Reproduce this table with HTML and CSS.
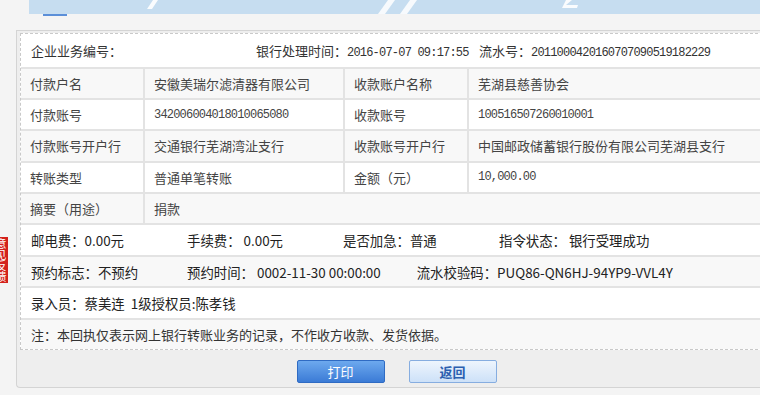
FILE: index.html
```html
<!DOCTYPE html>
<html lang="zh-CN">
<head>
    <meta charset="UTF-8">
    <meta name="viewport" content="width=device-width, initial-scale=1.0">
    <title>转账回执</title>
    <link rel="stylesheet" href="styles.css">
</head>
<body>
    <div class="steps">
        <div class="steps-bar">
            <svg width="731" height="14" viewBox="0 0 731 14">
                <polygon points="124,0 129,0 123,9 118,9" fill="#fff" opacity="0.9"/>
                <polygon points="359,0 366,0 356,14 349,14" fill="#fff" opacity="0.85"/>
                <polygon points="381,0 388,0 378,14 371,14" fill="#fff" opacity="0.85"/>
                <polygon points="537,0 543,0 537,5 549,5 548,8 533,8" fill="#fff" opacity="0.9"/>
            </svg>
        </div>
        <div class="steps-mark"></div>
    </div>

    <div class="feedback"><span>意见反馈</span></div>

    <div class="panel">
        <div class="receipt">
            <div class="receipt-head">
                <span>企业业务编号：</span>
                <span>银行处理时间：<span class="num">2016-07-07 09:17:55</span></span>
                <span>流水号：<span class="num">2011000420160707090519182229</span></span>
            </div>

            <div class="row shade">
                <div class="cell">付款户名</div>
                <div class="cell">安徽美瑞尔滤清器有限公司</div>
                <div class="cell">收款账户名称</div>
                <div class="cell">芜湖县慈善协会</div>
            </div>
            <div class="row">
                <div class="cell">付款账号</div>
                <div class="cell num">342006004018010065080</div>
                <div class="cell">收款账号</div>
                <div class="cell num">100516507260010001</div>
            </div>
            <div class="row shade">
                <div class="cell">付款账号开户行</div>
                <div class="cell">交通银行芜湖湾沚支行</div>
                <div class="cell">收款账号开户行</div>
                <div class="cell">中国邮政储蓄银行股份有限公司芜湖县支行</div>
            </div>
            <div class="row">
                <div class="cell">转账类型</div>
                <div class="cell">普通单笔转账</div>
                <div class="cell">金额（元）</div>
                <div class="cell num">10,000.00</div>
            </div>
            <div class="row shade">
                <div class="cell">摘要（用途）</div>
                <div class="cell wide">捐款</div>
            </div>

            <div class="line">
                <span class="item">邮电费：0.00元</span>
                <span class="item">手续费： 0.00元</span>
                <span class="item">是否加急：普通</span>
                <span>指令状态： 银行受理成功</span>
            </div>
            <div class="line shade">
                <span class="item">预约标志：不预约</span>
                <span class="item gap">预约时间： 0002-11-30 00:00:00</span>
                <span>流水校验码：PUQ86-QN6HJ-94YP9-VVL4Y</span>
            </div>
            <div class="line">
                <span>录入员：蔡美连&nbsp; 1级授权员:陈孝钱</span>
            </div>
            <div class="line shade note">
                <span>注：本回执仅表示网上银行转账业务的记录，不作收方收款、发货依据。</span>
            </div>
        </div>

        <div class="actions">
            <button class="btn btn-print">打印</button>
            <button class="btn btn-back">返回</button>
        </div>
    </div>
</body>
</html>
```

FILE: styles.css
```css
* {
    margin: 0;
    padding: 0;
    box-sizing: border-box;
}
body {
    background: #f4f4f4;
    width: 760px;
    height: 395px;
    overflow: hidden;
    font-family: "Noto Sans CJK SC", "Liberation Sans", sans-serif;
    font-size: 13px;
    color: #444;
}

/* step bar on top */
.steps {
    height: 30px;
}
.steps-bar {
    margin-left: 29px;
    height: 14px;
    background: #c6ddf0;
    overflow: hidden;
}
.steps-bar svg {
    display: block;
}
.steps-mark {
    margin-left: 43px;
    width: 24px;
    height: 2px;
    background: #5b8fd8;
}

/* floating tab on the left edge */
.feedback {
    position: fixed;
    left: 0;
    top: 237px;
    width: 8px;
    height: 46px;
    background: #d3211c;
    overflow: hidden;
}
.feedback span {
    display: block;
    writing-mode: vertical-rl;
    color: #fff;
    font-size: 11px;
    line-height: 11px;
    margin: 1px 0 0 -5px;
}

.panel {
    margin-left: 16px;
    width: 760px;
    background: #eeeeee;
    border: 1px solid #d4d4d4;
    border-right: none;
    border-radius: 0 0 0 4px;
    padding: 2px 3px 0 3px;
}
.receipt {
    background: #fff;
    border: 1px dashed #c9c9c9;
}

.receipt-head {
    display: grid;
    grid-template-columns: 225px 223px 1fr;
    align-items: center;
    height: 32.5px;
    padding-left: 10px;
    color: #333;
}

.num {
    font-family: "Liberation Mono", monospace;
    font-size: 12px;
    letter-spacing: -0.8px;
}

.row {
    display: grid;
    grid-template-columns: 122px 200px 124px 1fr;
    border-top: 2px solid #e3e3e3;
    height: 31.4px;
}
.cell {
    display: flex;
    align-items: center;
    padding-left: 9px;
    white-space: nowrap;
}
.cell + .cell {
    border-left: 2px solid #e3e3e3;
}
.cell.wide {
    grid-column: 2 / 5;
}

.shade {
    background: #f8f8f8;
}

.line {
    display: flex;
    align-items: center;
    border-top: 2px solid #e3e3e3;
    height: 31.4px;
    padding-left: 10px;
    font-size: 13.4px;
    color: #222;
    white-space: nowrap;
}
.line .item {
    width: 156px;
}
.line .item.gap {
    width: auto;
    margin-right: 36px;
}
.note {
    font-size: 13px;
    color: #333;
}

.actions {
    display: flex;
    justify-content: center;
    gap: 24px;
    padding: 10px 0 4px;
}
.btn {
    width: 88px;
    height: 23px;
    font-family: "Noto Sans CJK SC", sans-serif;
    font-size: 13px;
    border-radius: 2px;
    cursor: pointer;
}
.btn-print {
    color: #fff;
    background: linear-gradient(#6da9ee, #3b7bd6);
    border: 1px solid #2f6bc3;
}
.btn-back {
    color: #2b5fb0;
    font-weight: bold;
    background: linear-gradient(#eef5fd, #cde1f8);
    border: 1px solid #86ade0;
}
```
